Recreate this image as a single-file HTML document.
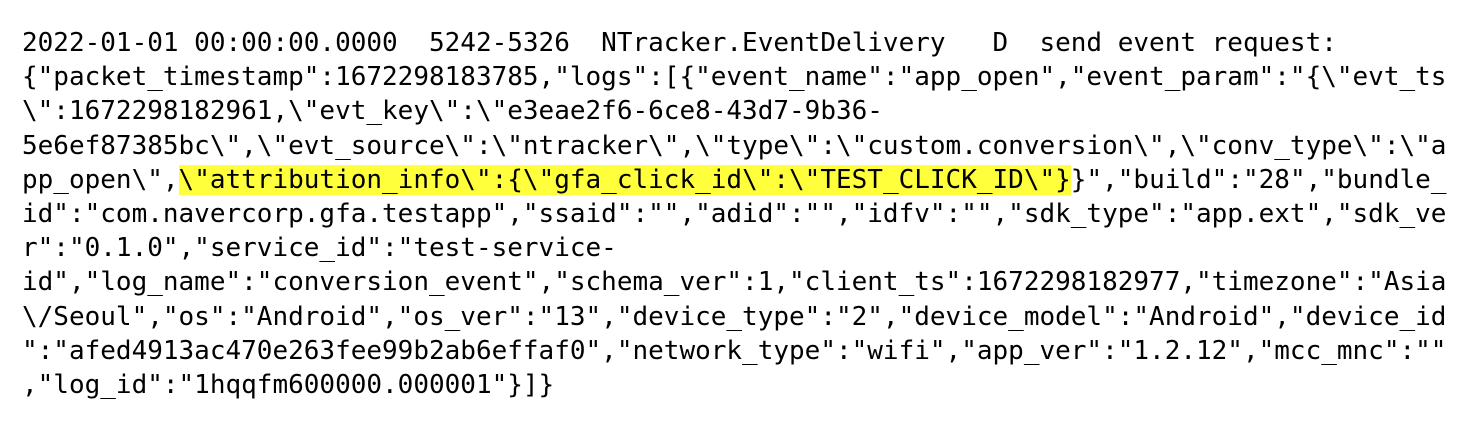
<!DOCTYPE html>
<html><head><meta charset="utf-8"><style>
html,body{margin:0;padding:0;background:#fff;width:1478px;height:426px;overflow:hidden}
pre{position:absolute;left:22px;top:26px;margin:0;font-family:"DejaVu Sans Mono","Liberation Mono",monospace;font-size:26px;line-height:34.2px;color:#000}
.h{background:#ffff3c}
</style></head><body>
<pre>2022-01-01 00:00:00.0000  5242-5326  NTracker.EventDelivery   D  send event request:
{"packet_timestamp":1672298183785,"logs":[{"event_name":"app_open","event_param":"{\"evt_ts
\":1672298182961,\"evt_key\":\"e3eae2f6-6ce8-43d7-9b36-
5e6ef87385bc\",\"evt_source\":\"ntracker\",\"type\":\"custom.conversion\",\"conv_type\":\"a
pp_open\",<span class="h">\"attribution_info\":{\"gfa_click_id\":\"TEST_CLICK_ID\"}</span>}","build":"28","bundle_
id":"com.navercorp.gfa.testapp","ssaid":"","adid":"","idfv":"","sdk_type":"app.ext","sdk_ve
r":"0.1.0","service_id":"test-service-
id","log_name":"conversion_event","schema_ver":1,"client_ts":1672298182977,"timezone":"Asia
\/Seoul","os":"Android","os_ver":"13","device_type":"2","device_model":"Android","device_id
":"afed4913ac470e263fee99b2ab6effaf0","network_type":"wifi","app_ver":"1.2.12","mcc_mnc":""
,"log_id":"1hqqfm600000.000001"}]}</pre>
</body></html>
